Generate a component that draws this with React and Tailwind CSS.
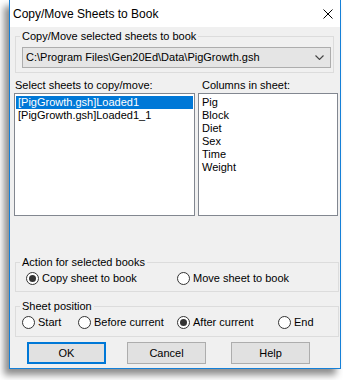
import React from 'react';

const Radio = ({ checked, label, className = '' }) => (
  <label className={`flex items-center gap-[3px] ${className}`}>
    <span className="w-[13px] h-[13px] rounded-full border border-[#333333] bg-white flex items-center justify-center shrink-0">
      {checked && <span className="w-[7px] h-[7px] rounded-full bg-[#333333]" />}
    </span>
    <span className="leading-[13px]">{label}</span>
  </label>
);

const GroupBox = ({ title, className = '', children }) => (
  <fieldset className={`border border-[#dcdcdc] pl-[4px] ${className}`}>
    <legend className="px-[2px] leading-[13px]">{title}</legend>
    {children}
  </fieldset>
);

const Button = ({ children, primary, className = '' }) => (
  <button
    className={`w-[79px] h-[22px] bg-[#e1e1e1] flex items-center justify-center ${
      primary ? 'border-2 border-[#0078d7]' : 'border border-[#adadad]'
    } ${className}`}
  >
    {children}
  </button>
);

export default function App() {
  const sheets = ['[PigGrowth.gsh]Loaded1', '[PigGrowth.gsh]Loaded1_1'];
  const columns = ['Pig', 'Block', 'Diet', 'Sex', 'Time', 'Weight'];

  return (
    <div
      className="w-[343px] h-[380px] bg-white overflow-hidden text-black"
      style={{ fontFamily: '"Liberation Sans", Arial, sans-serif' }}
    >
      <div className="ml-[9px] w-[332px] h-[369px] border-x border-b border-[#1580d8] bg-[#f0f0f0] shadow-[-5px_6px_7px_rgba(0,0,0,0.45)] flex flex-col">
        {/* Title bar */}
        <div className="h-[27px] bg-white flex items-center justify-between pl-[3px] pr-[7px] shrink-0">
          <span className="text-[12px]">Copy/Move Sheets to Book</span>
          <svg width="10" height="10" viewBox="0 0 10 10">
            <path d="M0.5 0.5 L9.5 9.5 M9.5 0.5 L0.5 9.5" stroke="#000" strokeWidth="1" />
          </svg>
        </div>

        {/* Body */}
        <div className="flex flex-col text-[11px]">
          <GroupBox title="Copy/Move selected sheets to book" className="ml-[5px] w-[319px] mt-[3px] pb-[4px]">
            <div className="ml-[2px] mt-[4px] w-[309px] h-[21px] bg-[#e5e5e5] border border-[#adadad] flex items-center justify-between pl-[3px] pr-[6px]">
              <span>C:\Program Files\Gen20Ed\Data\PigGrowth.gsh</span>
              <svg width="9" height="5" viewBox="0 0 9 5">
                <path d="M0.5 0.5 L4.5 4.5 L8.5 0.5" stroke="#444" strokeWidth="1.1" fill="none" />
              </svg>
            </div>
          </GroupBox>

          <div className="flex mt-[6px] leading-[13px]">
            <span className="ml-[5px] w-[187px]">Select sheets to copy/move:</span>
            <span>Columns in sheet:</span>
          </div>

          <div className="flex mt-[1px] ml-[4px] gap-[3px]">
            <div className="w-[181px] h-[123px] bg-white border border-[#828790] px-[1px] pt-[2px]">
              {sheets.map((s, i) => (
                <div
                  key={s}
                  className={`leading-[13px] pl-[2px] ${i === 0 ? 'bg-[#0078d7] text-white' : ''}`}
                >
                  {s}
                </div>
              ))}
            </div>
            <div className="w-[140px] h-[123px] bg-white border border-[#828790] px-[1px] pt-[2px]">
              {columns.map((c) => (
                <div key={c} className="leading-[13px] pl-[2px]">
                  {c}
                </div>
              ))}
            </div>
          </div>

          <GroupBox title="Action for selected books" className="ml-[5px] w-[324px] mt-[40px] pb-[6px]">
            <div className="flex mt-[3px] pl-[6px]">
              <Radio checked label="Copy sheet to book" className="w-[151px]" />
              <Radio label="Move sheet to book" />
            </div>
          </GroupBox>

          <GroupBox title="Sheet position" className="ml-[5px] w-[324px] mt-[8px] pb-[7px]">
            <div className="flex mt-[3px] pl-[2px]">
              <Radio label="Start" className="w-[56px]" />
              <Radio label="Before current" className="w-[99px]" />
              <Radio checked label="After current" className="w-[101px]" />
              <Radio label="End" />
            </div>
          </GroupBox>

          <div className="flex mt-[5px] ml-[17px]">
            <Button primary>OK</Button>
            <Button className="ml-[21px]">Cancel</Button>
            <Button className="ml-[25px]">Help</Button>
          </div>
        </div>
      </div>
    </div>
  );
}
